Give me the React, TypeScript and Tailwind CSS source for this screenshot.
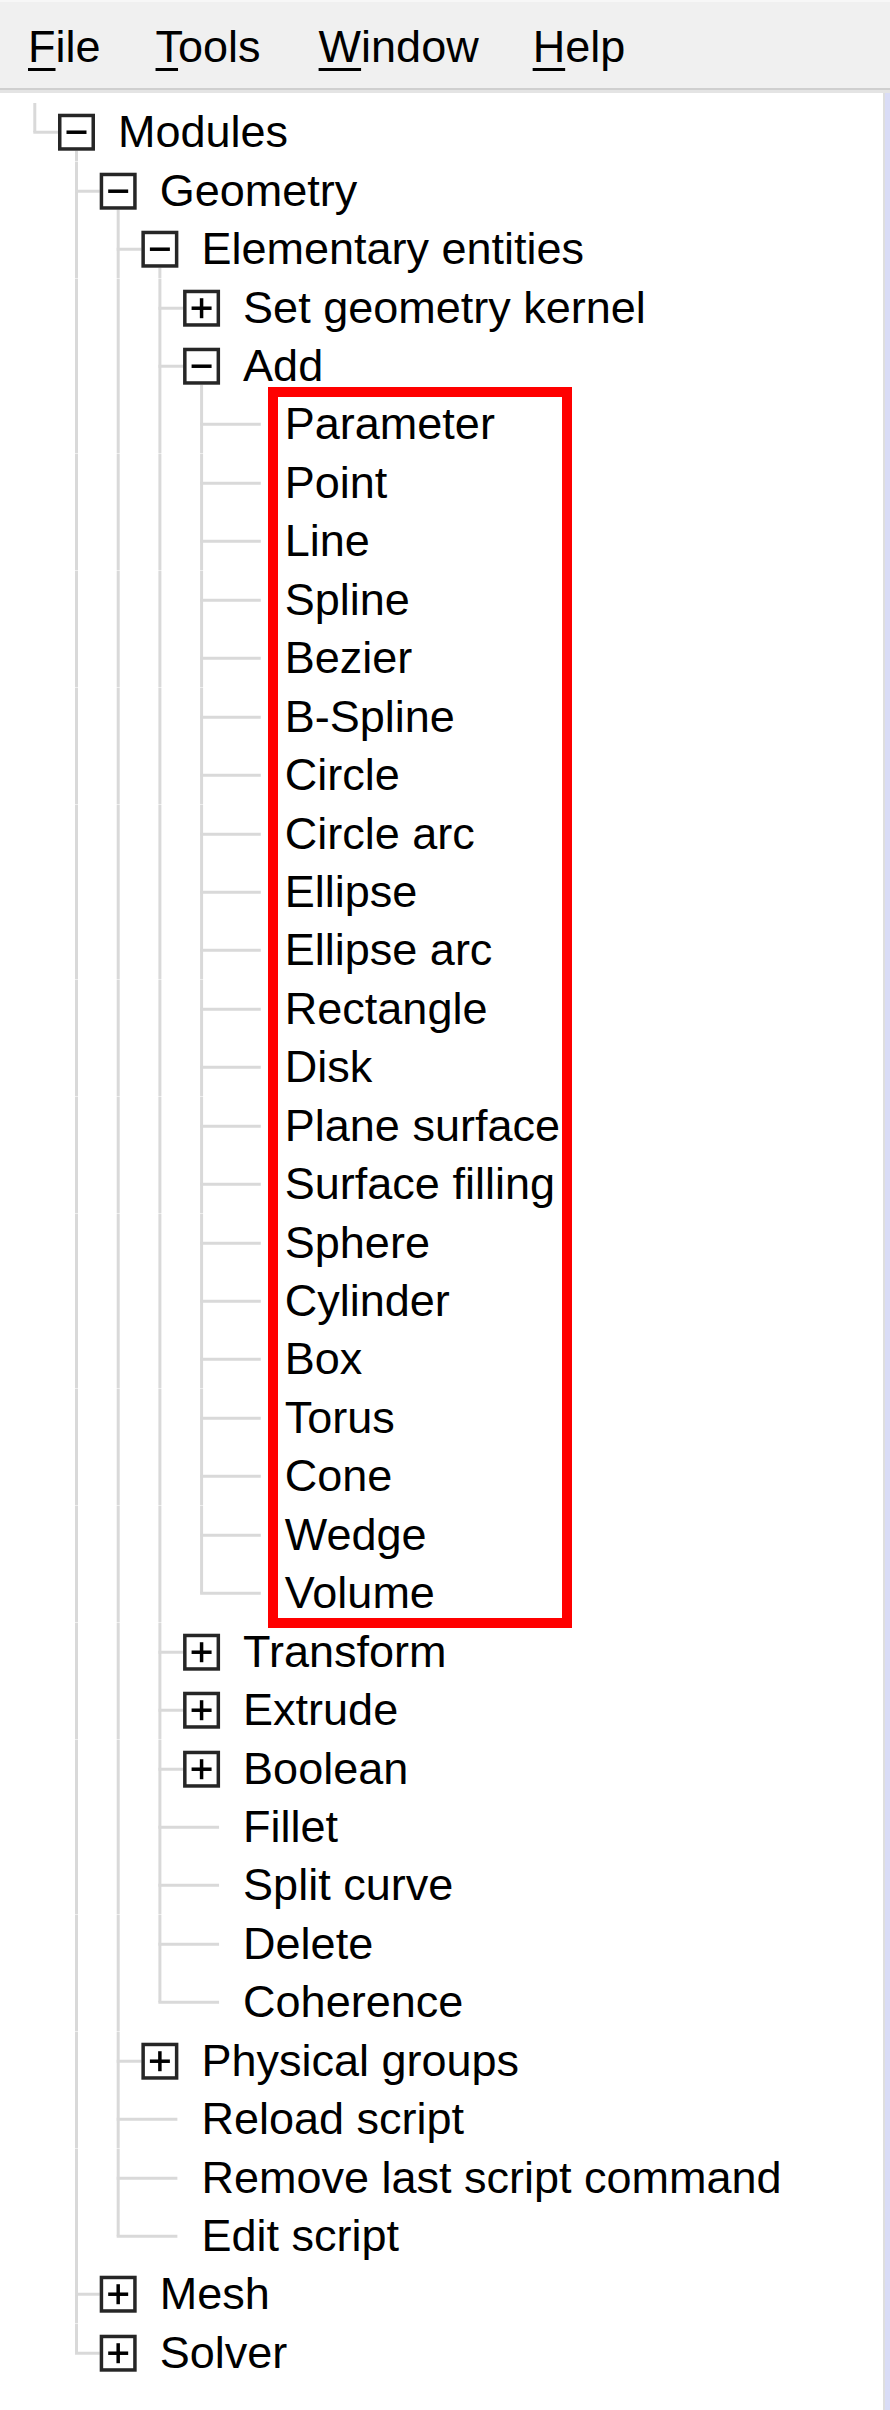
import React from "react";

type Node = { label: string; children?: Node[]; collapsed?: boolean };

const leaves = (names: string[]): Node[] => names.map((label) => ({ label }));

const tree: Node = {
  label: "Modules",
  children: [
    {
      label: "Geometry",
      children: [
        {
          label: "Elementary entities",
          children: [
            { label: "Set geometry kernel", collapsed: true },
            {
              label: "Add",
              children: leaves([
                "Parameter",
                "Point",
                "Line",
                "Spline",
                "Bezier",
                "B-Spline",
                "Circle",
                "Circle arc",
                "Ellipse",
                "Ellipse arc",
                "Rectangle",
                "Disk",
                "Plane surface",
                "Surface filling",
                "Sphere",
                "Cylinder",
                "Box",
                "Torus",
                "Cone",
                "Wedge",
                "Volume",
              ]),
            },
            { label: "Transform", collapsed: true },
            { label: "Extrude", collapsed: true },
            { label: "Boolean", collapsed: true },
            { label: "Fillet" },
            { label: "Split curve" },
            { label: "Delete" },
            { label: "Coherence" },
          ],
        },
        { label: "Physical groups", collapsed: true },
        { label: "Reload script" },
        { label: "Remove last script command" },
        { label: "Edit script" },
      ],
    },
    { label: "Mesh", collapsed: true },
    { label: "Solver", collapsed: true },
  ],
};

type Row = {
  label: string;
  level: number;
  guides: boolean[];
  isLast: boolean;
  kind: "leaf" | "plus" | "minus";
};

function flatten(node: Node, level: number, guides: boolean[], isLast: boolean, out: Row[]) {
  const kind: Row["kind"] = node.collapsed ? "plus" : node.children ? "minus" : "leaf";
  out.push({ label: node.label, level, guides, isLast, kind });
  if (node.children) {
    node.children.forEach((c, i) => {
      flatten(c, level + 1, [...guides, !isLast], i === node.children!.length - 1, out);
    });
  }
}

const rows: Row[] = [];
flatten(tree, 0, [], true, rows);

const H = 58.45;
const IND = 41.7;
const LINE = "#d9d9d9";
const BOX = "#262626";

function Guides({ row }: { row: Row }) {
  const L = row.level;
  const bx = 58 + IND * L;
  const w = bx + 37 + 1;
  const cy = H / 2;
  const cx = 34.8 + IND * L;
  return (
    <svg width={w} height={H} viewBox={`0 0 ${w} ${H}`} className="shrink-0 block">
      {row.guides.map((g, i) =>
        g && i > 0 ? (
          <line key={i} x1={34.8 + IND * i} y1={0} x2={34.8 + IND * i} y2={H} stroke={LINE} strokeWidth={3} />
        ) : null
      )}
      <line x1={cx} y1={0} x2={cx} y2={row.isLast ? cy : H} stroke={LINE} strokeWidth={3} />
      <line x1={cx - 1.5} y1={cy} x2={row.kind === "leaf" ? bx + 36 : bx} y2={cy} stroke={LINE} strokeWidth={3} />
      {row.kind === "minus" && (
        <line x1={bx + 18.5} y1={cy + 18.5} x2={bx + 18.5} y2={H} stroke={LINE} strokeWidth={3} />
      )}
      {row.kind !== "leaf" && (
        <g>
          <rect x={bx + 1.75} y={cy - 18.5 + 1.75} width={33.5} height={33.5} fill="#ffffff" stroke={BOX} strokeWidth={3.5} />
          <line x1={bx + 8.5} y1={cy} x2={bx + 28.5} y2={cy} stroke="#000" strokeWidth={3.5} />
          {row.kind === "plus" && <line x1={bx + 18.5} y1={cy - 10} x2={bx + 18.5} y2={cy + 10} stroke="#000" strokeWidth={3.5} />}
        </g>
      )}
    </svg>
  );
}

function MenuItem({ label, className }: { label: string; className?: string }) {
  return (
    <span className={"leading-[82px] " + (className ?? "")}>
      <span className="underline decoration-[3px] underline-offset-[6px]">{label[0]}</span>
      {label.slice(1)}
    </span>
  );
}

export default function App() {
  return (
    <div className="relative w-[890px] h-[2410px] flex flex-col bg-white text-black font-['Liberation_Sans',Arial,sans-serif] text-[45px] overflow-hidden">
      <div className="h-[88px] shrink-0 bg-[#f0f0f0] border-t-[2px] border-[#f7f7f7] flex items-start pt-[4px] pl-[28px]">
        <MenuItem label="File" />
        <MenuItem label="Tools" className="ml-[55px]" />
        <MenuItem label="Window" className="ml-[58px]" />
        <MenuItem label="Help" className="ml-[54px]" />
      </div>
      <div className="h-[2px] shrink-0 bg-[#cfcfcf]" />
      <div className="h-[3px] shrink-0 bg-[#e4e4e4]" />
      <div className="flex-1 flex">
        <div className="flex-1 flex flex-col pt-[10.3px]">
          {rows.map((r, i) => (
            <div key={i} className="h-[58.45px] flex items-center">
              <Guides row={r} />
              <span className="ml-[22px] leading-[58.45px] whitespace-nowrap">{r.label}</span>
            </div>
          ))}
        </div>
        <div className="w-[2px] bg-[#dedede]" />
        <div className="w-[5px] bg-[#d9dcf6]" />
      </div>
      <div className="absolute left-[268px] top-[387px] w-[304px] h-[1241px] border-[10px] border-[#ff0000]" />
    </div>
  );
}
